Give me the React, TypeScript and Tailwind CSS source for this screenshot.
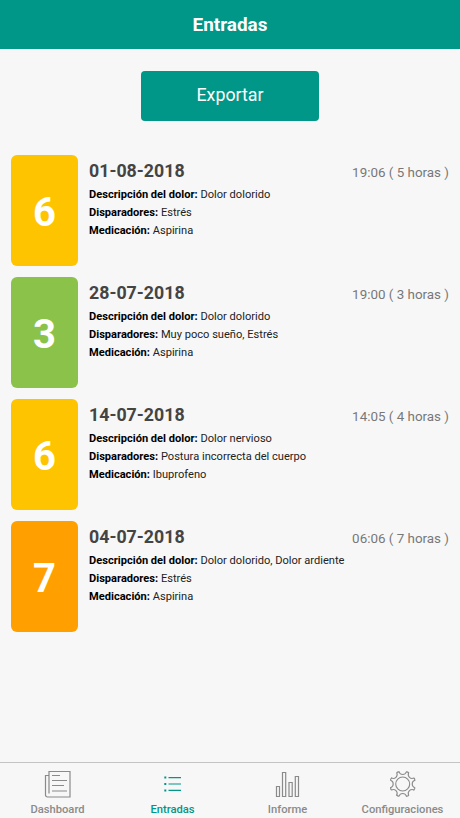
import React from 'react';

interface Entry {
  id: number;
  level: number;
  color: string;
  date: string;
  time: string;
  pain: string;
  triggers: string;
  medication: string;
}

const entries: Entry[] = [
  {
    id: 1,
    level: 6,
    color: 'bg-[#ffc400]',
    date: '01-08-2018',
    time: '19:06 ( 5 horas )',
    pain: 'Dolor dolorido',
    triggers: 'Estrés',
    medication: 'Aspirina'
  },
  {
    id: 2,
    level: 3,
    color: 'bg-[#8bc34a]',
    date: '28-07-2018',
    time: '19:00 ( 3 horas )',
    pain: 'Dolor dolorido',
    triggers: 'Muy poco sueño, Estrés',
    medication: 'Aspirina'
  },
  {
    id: 3,
    level: 6,
    color: 'bg-[#ffc400]',
    date: '14-07-2018',
    time: '14:05 ( 4 horas )',
    pain: 'Dolor nervioso',
    triggers: 'Postura incorrecta del cuerpo',
    medication: 'Ibuprofeno'
  },
  {
    id: 4,
    level: 7,
    color: 'bg-[#ffa000]',
    date: '04-07-2018',
    time: '06:06 ( 7 horas )',
    pain: 'Dolor dolorido, Dolor ardiente',
    triggers: 'Estrés',
    medication: 'Aspirina'
  }
];

const PaperIcon = () => (
  <svg className="h-8 w-8" viewBox="0 0 32 32" fill="none" stroke="currentColor" strokeWidth="1.2">
    <path d="M7 25.5V3.5H28V29H5.5C4.300 29 3.500 28.200 3.500 27V7.500H7" />
    <path d="M10 7.500H18M10 12.500H25M10 17.500H22M10 23H25" />
  </svg>
);

const ListIcon = () => (
  <svg className="h-8 w-8" viewBox="0 0 32 32" fill="none" stroke="currentColor" strokeWidth="1.2">
    <path d="M11.500 9.600H24M11.500 16H24M11.500 22.400H24" />
    <path d="M7.300 9.600H9.300M7.300 16H9.300M7.300 22.400H9.300" strokeWidth="2" />
  </svg>
);

const StatsIcon = () => (
  <svg className="h-8 w-8" viewBox="0 0 32 32" fill="none" stroke="currentColor" strokeWidth="1.2">
    <path d="M4.500 18.500H7.500V28.500H4.500zM10.500 4.500H13.700V28.500H10.500zM17 14.500H20.200V28.500H17zM23.300 8.500H26.500V28.500H23.300z" />
  </svg>
);

// one scalloped valley plus the flat tip of the tooth after it, repeated round the hub
const GearIcon = () => (
  <svg className="h-8 w-8" viewBox="0 0 32 32" fill="none" stroke="currentColor" strokeWidth="1.1">
    <circle cx="15.700" cy="16" r="7" />
    <g transform="translate(15.7 16)" strokeLinecap="round">
      {[0, 45, 90, 135, 180, 225, 270, 315].map((angle) => (
        <path
          key={angle}
          d="M-3.700 -12.100C-2.900 -10 -1.500 -9.500 0 -9.500S2.900 -10 3.700 -12.100Q4.900 -12.400 5.940 -11.170"
          transform={`rotate(${angle})`}
        />
      ))}
    </g>
  </svg>
);

const tabs = [
  { label: 'Dashboard', icon: PaperIcon, active: false },
  { label: 'Entradas', icon: ListIcon, active: true },
  { label: 'Informe', icon: StatsIcon, active: false },
  { label: 'Configuraciones', icon: GearIcon, active: false }
];

const EntryRow = ({ entry }: { entry: Entry }) => (
  <div className="flex h-[111px] gap-[11px]">
    <div
      className={`flex w-[67px] shrink-0 items-center justify-center rounded-md pt-1 text-[40px] font-bold text-white ${entry.color}`}
    >
      {entry.level}
    </div>
    <div className="min-w-0 flex-1 pt-1">
      <div className="flex items-center justify-between">
        <h2 className="text-[17.800px] leading-6 font-bold text-[#444]">{entry.date}</h2>
        <span className="pt-1 text-[13.400px] leading-5 text-[#777]">{entry.time}</span>
      </div>
      <div className="mt-[3px] text-[11.100px] leading-[17.800px] text-[#222]">
        <p><b className="text-black">Descripción del dolor:</b> {entry.pain}</p>
        <p><b className="text-black">Disparadores:</b> {entry.triggers}</p>
        <p><b className="text-black">Medicación:</b> {entry.medication}</p>
      </div>
    </div>
  </div>
);

const App = () => {
  return (
    <div className="flex h-screen flex-col bg-[#f7f7f7] font-['Roboto',sans-serif]">
      {/* Header */}
      <header className="flex h-[49px] shrink-0 items-center justify-center bg-[#009688] pt-0.5">
        <h1 className="text-[18.900px] font-bold text-white">Entradas</h1>
      </header>

      <main className="flex flex-1 flex-col px-[11px] pt-[22px]">
        <button className="h-[50px] w-[178px] self-center rounded bg-[#009688] pb-px text-[17.800px] text-white">
          Exportar
        </button>

        <div className="mt-[34px] flex flex-col gap-[11px]">
          {entries.map((entry) => (
            <EntryRow key={entry.id} entry={entry} />
          ))}
        </div>
      </main>

      {/* Bottom tabs */}
      <nav className="grid h-14 shrink-0 grid-cols-4 border-t border-[#c4c4c4]">
        {tabs.map(({ label, icon: Icon, active }) => (
          <div
            key={label}
            className={`flex flex-col items-center pt-[5px] ${active ? 'text-[#009688]' : 'text-[#8a8a8a]'}`}
          >
            <Icon />
            <span className="mt-0.5 text-[11.200px] leading-4 font-medium">{label}</span>
          </div>
        ))}
      </nav>
    </div>
  );
};

export default App;
